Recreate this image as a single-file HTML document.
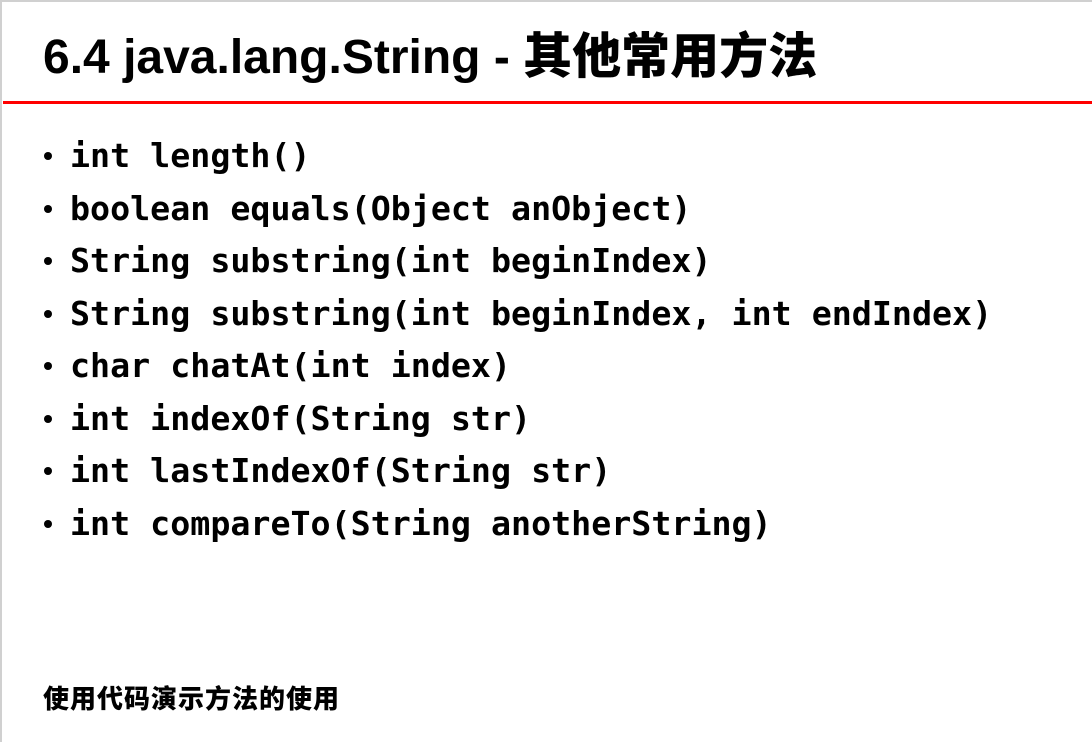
<!DOCTYPE html>
<html><head><meta charset="utf-8"><style>
html,body{margin:0;padding:0;background:#fff;}
body{width:1092px;height:742px;position:relative;overflow:hidden;}
.bt{position:absolute;left:0;top:0;width:1092px;height:2px;background:#d0d0d0;}
.bl{position:absolute;left:0;top:0;width:2px;height:742px;background:#d0d0d0;}
.red{position:absolute;left:3px;right:0;top:101px;height:3px;background:#ff0000;}
h1{position:absolute;left:43px;top:27px;margin:0;font:bold 48px/60px "Liberation Sans","Noto Sans CJK SC",sans-serif;color:#000;white-space:nowrap;}
h1 .c{font-size:49px;font-weight:900;}
ul{position:absolute;left:40px;top:130px;margin:0;padding:0;list-style:none;}
li{height:52.5px;font:bold 33.3px/52.5px "DejaVu Sans Mono","Liberation Mono",monospace;white-space:pre;position:relative;padding-left:30px;}
li:before{content:"";position:absolute;left:4px;top:22px;width:8px;height:8px;border-radius:50%;background:#000;}
.f{position:absolute;left:43px;top:680px;font:900 26px/36px "Noto Sans CJK SC",sans-serif;letter-spacing:1px;white-space:nowrap;}
</style></head><body>
<div class="bt"></div><div class="bl"></div>
<h1>6.4 java.lang.String - <span class="c">其他常用方法</span></h1>
<div class="red"></div>
<ul>
<li>int length()</li>
<li>boolean equals(Object anObject)</li>
<li>String substring(int beginIndex)</li>
<li>String substring(int beginIndex, int endIndex)</li>
<li>char chatAt(int index)</li>
<li>int indexOf(String str)</li>
<li>int lastIndexOf(String str)</li>
<li>int compareTo(String anotherString)</li>
</ul>
<div class="f">使用代码演示方法的使用</div>
</body></html>
